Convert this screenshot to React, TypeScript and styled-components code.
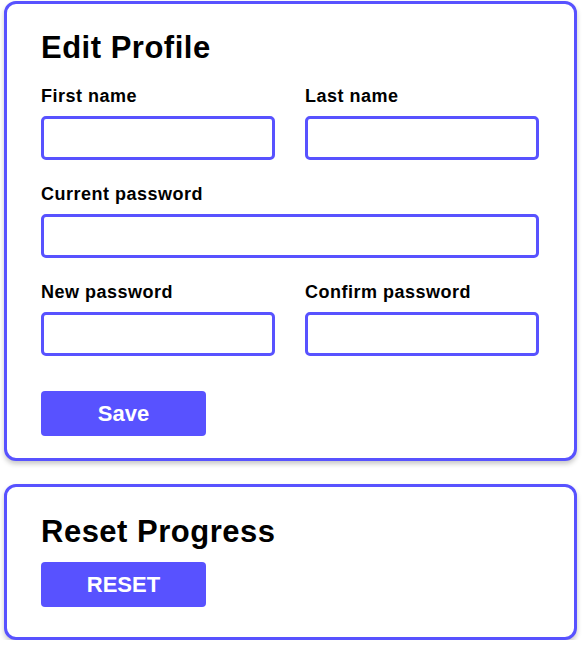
import React from "react";
import styled, { createGlobalStyle } from "styled-components";

const ACCENT = "#5852ff";

const GlobalStyle = createGlobalStyle`
  html, body {
    margin: 0;
    padding: 0;
    background: #ffffff;
  }
  body {
    font-family: "Liberation Sans", Arial, Helvetica, sans-serif;
    color: #000000;
  }
  * { box-sizing: border-box; }
`;

const Page = styled.div`
  width: 582px;
  padding: 1px 5px 0 4px;
  display: flex;
  flex-direction: column;
  gap: 23px;
`;

const Card = styled.section<{ $padTop: number; $padBottom: number }>`
  border: 3px solid ${ACCENT};
  border-radius: 12px;
  background: #ffffff;
  box-shadow: 0 3px 5px rgba(0, 0, 0, 0.22);
  padding: ${(p) => p.$padTop}px 35px ${(p) => p.$padBottom}px 34px;
  display: flex;
  flex-direction: column;
`;

const Heading = styled.h2<{ $gap: number }>`
  margin: 0 0 ${(p) => p.$gap}px 0;
  font-size: 31px;
  line-height: 36px;
  font-weight: 700;
  letter-spacing: 0.5px;
`;

const Grid = styled.div`
  display: grid;
  grid-template-columns: 1fr 1fr;
  column-gap: 30px;
  row-gap: 23px;
`;

const Field = styled.label<{ $wide?: boolean }>`
  display: flex;
  flex-direction: column;
  gap: 9px;
  grid-column: ${(p) => (p.$wide ? "1 / -1" : "auto")};
`;

const LabelText = styled.span`
  font-size: 18px;
  line-height: 22px;
  font-weight: 700;
  letter-spacing: 0.5px;
`;

const Input = styled.input`
  height: 44px;
  width: 100%;
  border: 3px solid ${ACCENT};
  border-radius: 5px;
  background: #ffffff;
  padding: 0 10px;
  font-family: inherit;
  font-size: 16px;
  outline: none;
`;

const Button = styled.button<{ $top: number }>`
  margin-top: ${(p) => p.$top}px;
  width: 165px;
  height: 45px;
  border: none;
  border-radius: 4px;
  background: ${ACCENT};
  color: #ffffff;
  font-family: inherit;
  font-size: 22px;
  font-weight: 700;
  cursor: pointer;
  padding: 0;
`;

export default function App() {
  return (
    <>
      <GlobalStyle />
      <Page>
        <Card $padTop={26} $padBottom={22}>
          <Heading $gap={19}>Edit Profile</Heading>
          <Grid>
            <Field>
              <LabelText>First name</LabelText>
              <Input type="text" />
            </Field>
            <Field>
              <LabelText>Last name</LabelText>
              <Input type="text" />
            </Field>
            <Field $wide>
              <LabelText>Current password</LabelText>
              <Input type="password" />
            </Field>
            <Field>
              <LabelText>New password</LabelText>
              <Input type="password" />
            </Field>
            <Field>
              <LabelText>Confirm password</LabelText>
              <Input type="password" />
            </Field>
          </Grid>
          <div>
            <Button $top={35}>Save</Button>
          </div>
        </Card>
        <Card $padTop={27} $padBottom={30}>
          <Heading $gap={12}>Reset Progress</Heading>
          <div>
            <Button $top={0}>RESET</Button>
          </div>
        </Card>
      </Page>
    </>
  );
}
